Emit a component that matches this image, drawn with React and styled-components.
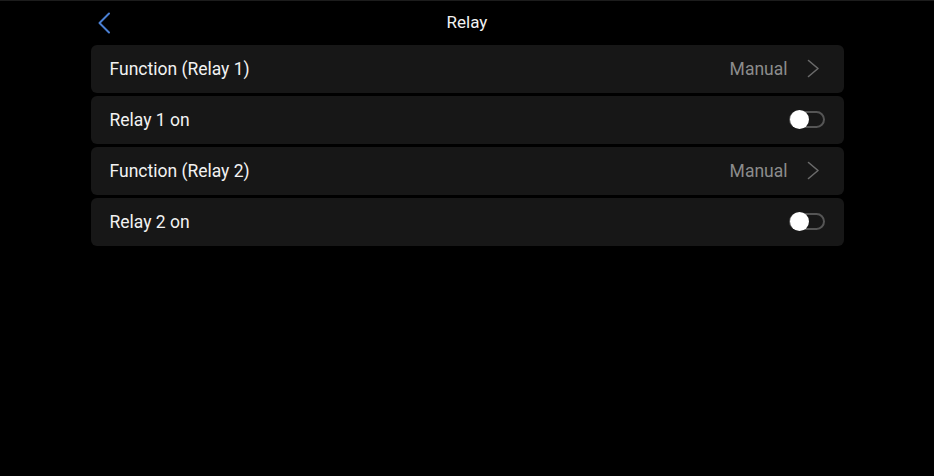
import React from "react";
import styled, { createGlobalStyle } from "styled-components";

const Global = createGlobalStyle`
  html, body { margin: 0; padding: 0; background: #000; }
  body { font-family: Roboto, "Noto Sans", sans-serif; -webkit-font-smoothing: antialiased; }
`;

const Page = styled.div`
  width: 934px;
  height: 476px;
  background: #000;
  border-top: 1px solid #1c1c1c;
  box-sizing: border-box;
  display: flex;
  flex-direction: column;
  align-items: center;
`;

const Header = styled.header`
  position: relative;
  width: 753px;
  height: 44px;
  display: flex;
  align-items: center;
  justify-content: center;
`;

const Back = styled.button`
  position: absolute;
  left: 1px;
  top: 9px;
  width: 24px;
  height: 26px;
  padding: 0;
  border: 0;
  background: none;
  display: flex;
  align-items: center;
  justify-content: center;
`;

const Title = styled.h1`
  margin: 0 0 2px 0;
  font-size: 17px;
  font-weight: 400;
  color: #f2f2f2;
  line-height: 1;
`;

const List = styled.div`
  width: 753px;
  display: flex;
  flex-direction: column;
  gap: 3px;
`;

const Row = styled.div`
  height: 48px;
  background: #171717;
  border-radius: 6px;
  display: flex;
  align-items: center;
  padding: 0 ${(p) => (p.$toggle ? 19 : 24)}px 1px 19px;
  box-sizing: border-box;
`;

const Label = styled.span`
  flex: 1;
  font-size: 17.5px;
  color: #f2f2f2;
`;

const Value = styled.span`
  font-size: 17.5px;
  color: #8c8c8c;
  margin-right: 19px;
`;

const Track = styled.div`
  position: relative;
  width: 36px;
  height: 17px;
  box-sizing: border-box;
  border: 2px solid #555;
  border-radius: 9px;
`;

const Knob = styled.div`
  position: absolute;
  left: -1px;
  top: 50%;
  width: 19px;
  height: 19px;
  margin-top: -9.5px;
  border-radius: 50%;
  background: #fff;
`;

const Chevron = ({ color }) => (
  <svg width="13" height="19" viewBox="0 0 13 19" fill="none">
    <path d="M1.5 1.5 L11 9.5 L1.5 17.5" stroke={color} strokeWidth="1.6" strokeLinecap="round" strokeLinejoin="round" />
  </svg>
);

const BackIcon = () => (
  <svg width="14" height="22" viewBox="0 0 14 22" fill="none">
    <path d="M12 1.5 L2.5 11 L12 20.5" stroke="#4a7fd3" strokeWidth="2" strokeLinecap="round" strokeLinejoin="round" />
  </svg>
);

const Toggle = () => (
  <Track>
    <Knob />
  </Track>
);

export default function App() {
  const rows = [
    { label: "Function (Relay 1)", value: "Manual" },
    { label: "Relay 1 on", toggle: true },
    { label: "Function (Relay 2)", value: "Manual" },
    { label: "Relay 2 on", toggle: true },
  ];
  return (
    <>
      <Global />
      <Page>
        <Header>
          <Back aria-label="Back"><BackIcon /></Back>
          <Title>Relay</Title>
        </Header>
        <List>
          {rows.map((r) => (
            <Row key={r.label} $toggle={r.toggle}>
              <Label>{r.label}</Label>
              {r.toggle ? (
                <Toggle />
              ) : (
                <>
                  <Value>{r.value}</Value>
                  <Chevron color="#6a6a6a" />
                </>
              )}
            </Row>
          ))}
        </List>
      </Page>
    </>
  );
}
